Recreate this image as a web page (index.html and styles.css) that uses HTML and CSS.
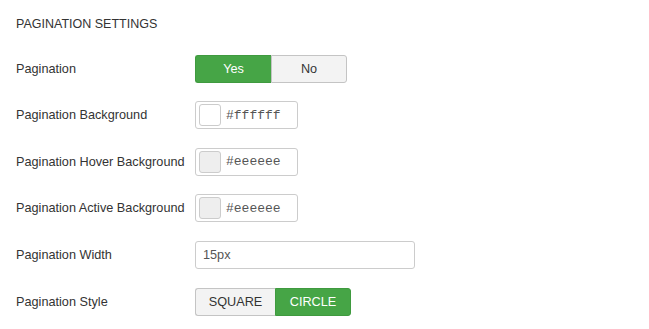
FILE: index.html
```html
<!DOCTYPE html>
<html>

<head>
    <meta charset="utf-8">
    <title>Pagination Settings</title>
    <link rel="stylesheet" href="styles.css">
</head>

<body>
    <div id="settings">
        <h3 class="legend">PAGINATION SETTINGS</h3>

        <div class="row">
            <label>Pagination</label>
            <div class="btn-group">
                <div class="btn active">Yes</div>
                <div class="btn">No</div>
            </div>
        </div>

        <div class="row">
            <label>Pagination Background</label>
            <div class="color-input">
                <span class="swatch" style="background-color: #ffffff"></span>
                <span class="value">#ffffff</span>
            </div>
        </div>

        <div class="row">
            <label>Pagination Hover Background</label>
            <div class="color-input">
                <span class="swatch" style="background-color: #eeeeee"></span>
                <span class="value">#eeeeee</span>
            </div>
        </div>

        <div class="row">
            <label>Pagination Active Background</label>
            <div class="color-input">
                <span class="swatch" style="background-color: #eeeeee"></span>
                <span class="value">#eeeeee</span>
            </div>
        </div>

        <div class="row">
            <label>Pagination Width</label>
            <input type="text" class="text-input" value="15px">
        </div>

        <div class="row">
            <label>Pagination Style</label>
            <div class="btn-group style">
                <div class="btn">SQUARE</div>
                <div class="btn active">CIRCLE</div>
            </div>
        </div>
    </div>
</body>
</html>
```

FILE: styles.css
```css
* {
    box-sizing: border-box;
}

body {
    margin: 0;
    background-color: #ffffff;
    font-family: 'Liberation Sans', Arial, sans-serif;
    font-size: 12.7px;
    color: #333333;
}

#settings {
    padding: 15px 16px 0 16px;
    display: flex;
    flex-direction: column;
    gap: 18.6px;
}

.legend {
    margin: 0 0 3px 0;
    font-size: 12.5px;
    font-weight: normal;
    line-height: 18px;
}

.row {
    display: flex;
    align-items: center;
    height: 28px;
}

.row label {
    width: 179px;
    line-height: 18px;
}

.btn-group {
    display: flex;
    height: 28px;
}

.btn {
    width: 76px;
    line-height: 26px;
    text-align: center;
    background-color: #f3f3f3;
    color: #333333;
    border: 1px solid #c4c4c4;
}

.btn:first-child {
    border-radius: 3px 0 0 3px;
    border-right: none;
}

.btn:last-child {
    border-radius: 0 3px 3px 0;
}

.btn.active {
    background-color: #46a546;
    border-color: #3f9a3f;
    color: #ffffff;
}

.style .btn {
    width: 80px;
}

.style .btn:last-child {
    width: 76px;
}

.color-input {
    display: flex;
    align-items: center;
    width: 103px;
    height: 28px;
    padding: 0 3px;
    border: 1px solid #cccccc;
    border-radius: 3px;
}

.swatch {
    width: 22px;
    height: 22px;
    border: 1px solid #cccccc;
    border-radius: 3px;
}

.value {
    margin-left: 5px;
    font-family: 'Liberation Mono', 'Courier New', monospace;
    font-size: 13px;
    color: #555555;
}

.text-input {
    width: 220px;
    height: 28px;
    padding: 4px 7px;
    border: 1px solid #cccccc;
    border-radius: 3px;
    font-family: 'Liberation Sans', Arial, sans-serif;
    font-size: 12.7px;
    color: #555555;
}
```
